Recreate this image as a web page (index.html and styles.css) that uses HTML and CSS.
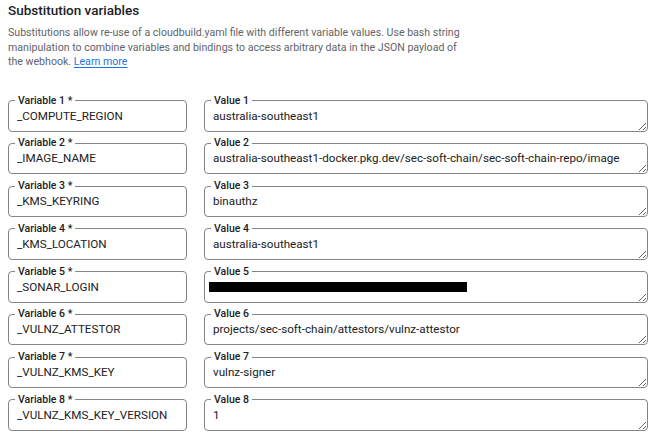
FILE: index.html
```html
<!DOCTYPE html>
<html>
<head>
<meta charset="utf-8">
<link rel="stylesheet" href="styles.css">
</head>
<body>
<div class="page">
  <h2 class="title">Substitution variables</h2>
  <p class="desc">Substitutions allow re-use of a cloudbuild.yaml file with different variable values. Use bash string manipulation to combine variables and bindings to access arbitrary data in the JSON payload of the webhook. <a class="link" href="#">Learn more</a></p>
  <div class="vars">
    <fieldset class="field"><legend class="label">Variable 1 *</legend><input class="inp" value="_COMPUTE_REGION"></fieldset>
    <fieldset class="field"><legend class="label">Value 1</legend><textarea class="ta">australia-southeast1</textarea></fieldset>

    <fieldset class="field"><legend class="label">Variable 2 *</legend><input class="inp" value="_IMAGE_NAME"></fieldset>
    <fieldset class="field"><legend class="label">Value 2</legend><textarea class="ta">australia-southeast1-docker.pkg.dev/sec-soft-chain/sec-soft-chain-repo/image</textarea></fieldset>

    <fieldset class="field"><legend class="label">Variable 3 *</legend><input class="inp" value="_KMS_KEYRING"></fieldset>
    <fieldset class="field"><legend class="label">Value 3</legend><textarea class="ta">binauthz</textarea></fieldset>

    <fieldset class="field"><legend class="label">Variable 4 *</legend><input class="inp" value="_KMS_LOCATION"></fieldset>
    <fieldset class="field"><legend class="label">Value 4</legend><textarea class="ta">australia-southeast1</textarea></fieldset>

    <fieldset class="field"><legend class="label">Variable 5 *</legend><input class="inp" value="_SONAR_LOGIN"></fieldset>
    <fieldset class="field"><legend class="label">Value 5</legend><div class="ta-wrap"><textarea class="ta"></textarea><span class="redact"></span></div></fieldset>

    <fieldset class="field"><legend class="label">Variable 6 *</legend><input class="inp" value="_VULNZ_ATTESTOR"></fieldset>
    <fieldset class="field"><legend class="label">Value 6</legend><textarea class="ta">projects/sec-soft-chain/attestors/vulnz-attestor</textarea></fieldset>

    <fieldset class="field"><legend class="label">Variable 7 *</legend><input class="inp" value="_VULNZ_KMS_KEY"></fieldset>
    <fieldset class="field"><legend class="label">Value 7</legend><textarea class="ta">vulnz-signer</textarea></fieldset>

    <fieldset class="field"><legend class="label">Variable 8 *</legend><input class="inp" value="_VULNZ_KMS_KEY_VERSION"></fieldset>
    <fieldset class="field"><legend class="label">Value 8</legend><textarea class="ta">1</textarea></fieldset>
  </div>
</div>
</body>
</html>
```
FILE: styles.css
```css
html, body {
  margin: 0;
  padding: 0;
  background: #ffffff;
}
body {
  font-family: Roboto, "Liberation Sans", sans-serif;
  color: #202124;
}
.page {
  padding: 0 8px;
}
.title {
  margin: 0;
  font-size: 13.5px;
  line-height: 20px;
  font-weight: 500;
  color: #202124;
}
.desc {
  margin: 6px 0 0 0;
  max-width: 465px;
  font-size: 10.6px;
  line-height: 14.5px;
  color: #5f6368;
}
.link {
  color: #1a73e8;
  text-decoration: underline;
  text-underline-offset: 2px;
}
.vars {
  margin-top: 25px;
  display: grid;
  grid-template-columns: 179px 1fr;
  column-gap: 17px;
  row-gap: 5.75px;
}
.field {
  margin: 0;
  padding: 0 0 0 6px;
  border: 1px solid #80868b;
  border-radius: 4px;
  min-width: 0;
}
.label {
  padding: 0 3px;
  font-size: 10.5px;
  line-height: 12px;
  font-weight: 500;
  color: #202124;
}
.inp {
  display: block;
  box-sizing: border-box;
  width: 100%;
  height: 18px;
  margin: 0 0 6px 0;
  padding: 0 0 0 2px;
  border: 0;
  outline: none;
  background: transparent;
  font-family: Roboto, "Liberation Sans", sans-serif;
  font-size: 11.65px;
  line-height: 18px;
  color: #202124;
}
.ta {
  display: block;
  box-sizing: border-box;
  width: 100%;
  height: 24px;
  margin: 0;
  padding: 0 0 0 2px;
  border: 0;
  outline: none;
  background: transparent;
  font-family: Roboto, "Liberation Sans", sans-serif;
  font-size: 11.65px;
  line-height: 19px;
  color: #202124;
  resize: vertical;
  overflow: hidden;
  white-space: nowrap;
}
.ta-wrap {
  position: relative;
}
.redact {
  position: absolute;
  left: -2px;
  top: 4px;
  width: 258px;
  height: 10px;
  background: #000000;
}
```
